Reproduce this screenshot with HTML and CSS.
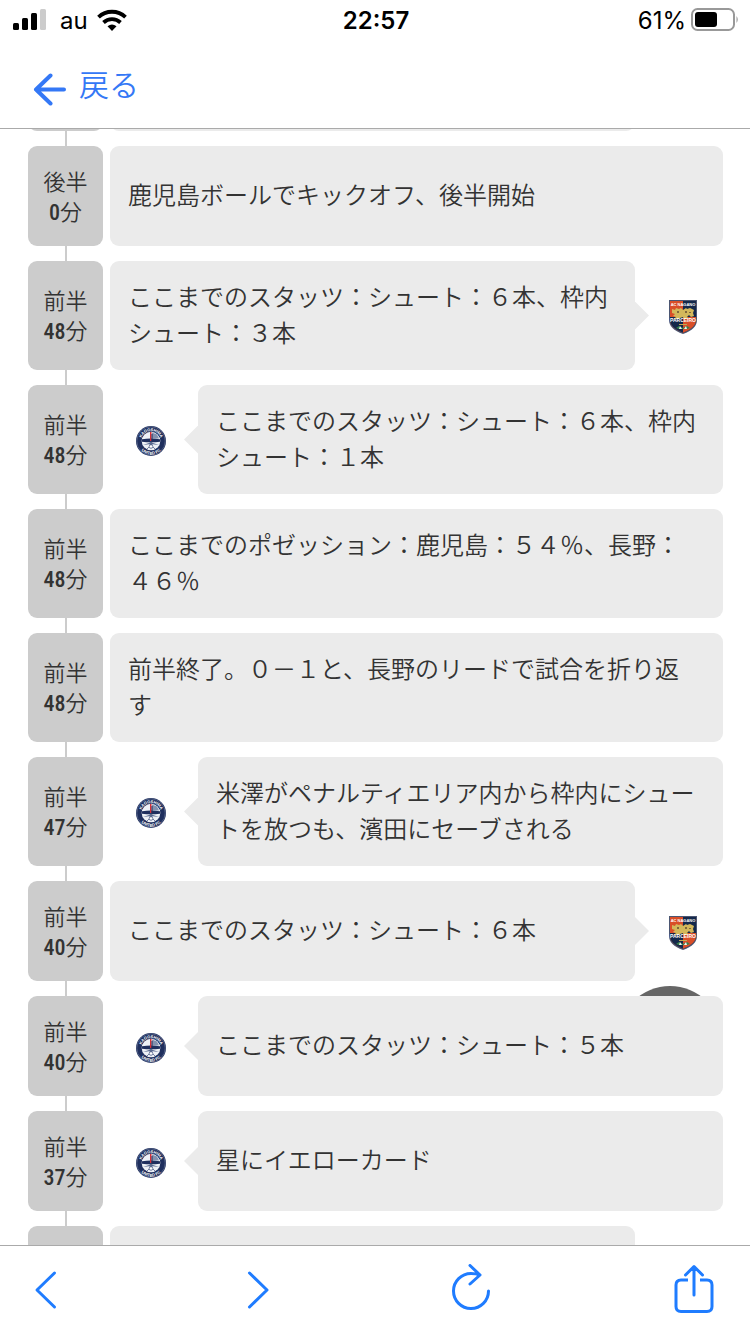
FILE: index.html
```html
<!DOCTYPE html>
<html lang="ja">
<head>
<meta charset="utf-8">
<meta name="viewport" content="width=device-width, initial-scale=1">
<title>テキスト速報</title>
<link rel="stylesheet" href="styles.css">
</head>
<body>
<div class="app">
  <div class="status">
    <div class="status__left">
      <svg width="33" height="22" viewBox="0 0 33 22" aria-hidden="true">
        <rect x="0" y="14" width="6" height="7" rx="1.500"/>
        <rect x="9" y="9" width="6" height="12" rx="1.500"/>
        <rect x="18" y="4" width="6" height="17" rx="1.500"/>
        <rect x="27" y="0" width="6" height="21" rx="1.500" fill="#ccc"/>
      </svg>
      <span class="status__carrier">au</span>
      <svg width="30" height="22" viewBox="0 0 30 22" aria-hidden="true">
        <g fill="none" stroke="#000" stroke-width="3.800">
          <path d="M1.500 8.200a19.500 19.500 0 0 1 27 0"/>
          <path d="M6.500 13.500a12.500 12.500 0 0 1 17 0"/>
        </g>
        <path d="M10.500 17.200q4.500-3.600 9 0L15 22z"/>
      </svg>
    </div>
    <time class="status__clock">22:57</time>
    <div class="status__right">
      <span>61%</span>
      <svg width="48" height="24" viewBox="0 0 48 24" aria-hidden="true">
        <rect x="1" y="1" width="42" height="21" rx="5.500" fill="none" stroke="#999" stroke-width="2"/>
        <rect x="4" y="4" width="22" height="15" rx="3"/>
        <path d="M45.500 8q2.500 3.500 0 7z" fill="#999"/>
      </svg>
    </div>
  </div>

  <header class="header">
    <button class="back" type="button">
      <svg class="back__arrow" width="33" height="33" viewBox="0 0 33 33" aria-hidden="true">
        <path d="M17.500 2.500L3 16.500l14.500 14M3 16.500h28" fill="none" stroke="currentColor" stroke-width="4" stroke-linecap="round" stroke-linejoin="round"/>
      </svg>
      <span>戻る</span>
    </button>
  </header>

  <main class="feed">
    <button class="to-top" type="button" aria-label="トップへ"></button>
    <ol class="timeline">
      <li class="entry entry--previous entry--away">
        <div class="entry__time"></div>
        <div class="entry__body"></div>
      </li>
      <li class="entry">
        <div class="entry__time">後半<br><b>0</b>分</div>
        <p class="entry__body">鹿児島ボールでキックオフ、後半開始</p>
      </li>
      <li class="entry entry--double entry--away">
        <div class="entry__time">前半<br><b>48</b>分</div>
        <p class="entry__body">ここまでのスタッツ：シュート：６本、枠内シュート：３本</p>
        <div class="entry__team">
          <svg width="28" height="34" viewBox="0 0 28 34" role="img" aria-label="長野">
            <g id="nagano">
              <path d="M0 0h28v20q0 9-14 14Q0 29 0 20z" fill="#4b5672"/>
              <path d="M1 1h13v31.800Q1 28 1 20z" fill="#d94e28"/>
              <path d="M14 1h13v19q0 8-13 12.800z" fill="#14284b"/>
              <path d="M1 17h13v15.800Q1 28 1 20z" fill="#14284b"/>
              <path d="M14 17h13v3q0 8-13 12.800z" fill="#d94e28"/>
              <path d="M3 9l3 1 1-2 3 1 2-1 2 2 3-2 1 1 3-1 4 2-1 3 1 3-3 1-2-2-2 2 2 2h-5l-1-2-3 1-2 1H5l2-2-3-1 2-2-3-1z" fill="#d3b85b"/>
              <path d="M8 11h2v2H8zM16 11h2v2h-2zM20 12h2v1h-2z" fill="#80683b"/>
              <path d="M10 24h8v1h-8z" fill="#c1a850"/>
              <path d="M7 28l3-2 4 2 4-2 3 2-3 1H10z" fill="#38814c"/>
              <path d="M11 26l2 3h-3zM17 26l1 3h-3z" fill="#f3f5ef"/>
              <text class="crest-text" x="14" y="6">AC NAGANO</text>
              <text class="crest-text crest-text--large" x="14" y="22">PARCEIRO</text>
            </g>
          </svg>
        </div>
      </li>
      <li class="entry entry--double entry--home">
        <div class="entry__time">前半<br><b>48</b>分</div>
        <div class="entry__team">
          <svg width="30" height="30" viewBox="0 0 30 30" role="img" aria-label="鹿児島">
            <g id="kagoshima">
              <circle cx="15" cy="15" r="15" fill="#1f2f5e"/>
              <circle cx="15" cy="15" r="14.2" fill="none" stroke="#7d88a5" stroke-width="0.5"/>
              <circle cx="15" cy="15" r="9.300" fill="#eef1f6"/>
              <path d="M16 6.500l5 2 2 4h-7z" fill="#8291ae"/>
              <path d="M6 13.200q9-1.600 18 0v2.500q-9 1-18 0z" fill="#1f2f5e"/>
              <path d="M14 6h1.500v9H14z" fill="#d22f37"/>
              <path d="M15.500 8h1v8h-1z" fill="#1f2f5e"/>
              <path d="M7 19l6-2 2-1.500 2 1.500 6 2-6-.7-2 1-2-1z" fill="#596a90"/>
              <circle cx="15" cy="20.500" r="1.800" fill="#fff" stroke="#394b78" stroke-width="0.700"/>
              <path d="M11 23l2-2M19 23l-2-2" stroke="#6f7d9d" stroke-width="1"/>
              <path id="arc-top" d="M5 15a10 10 0 0 1 20 0" fill="none"/>
              <path id="arc-bottom" d="M1.500 15a13.500 13.500 0 0 0 27 0" fill="none"/>
              <text class="crest-text"><textPath href="#arc-top" startOffset="50%">KAGOSHIMA</textPath></text>
              <text class="crest-text"><textPath href="#arc-bottom" startOffset="50%">UNITED FC</textPath></text>
            </g>
          </svg>
        </div>
        <p class="entry__body">ここまでのスタッツ：シュート：６本、枠内シュート：１本</p>
      </li>
      <li class="entry entry--double">
        <div class="entry__time">前半<br><b>48</b>分</div>
        <p class="entry__body">ここまでのポゼッション：鹿児島：５４％、長野：４６％</p>
      </li>
      <li class="entry entry--double">
        <div class="entry__time">前半<br><b>48</b>分</div>
        <p class="entry__body">前半終了。０－１と、長野のリードで試合を折り返す</p>
      </li>
      <li class="entry entry--double entry--home">
        <div class="entry__time">前半<br><b>47</b>分</div>
        <div class="entry__team"><svg width="30" height="30" viewBox="0 0 30 30" role="img" aria-label="鹿児島"><use href="#kagoshima"/></svg></div>
        <p class="entry__body">米澤がペナルティエリア内から枠内にシュートを放つも、濱田にセーブされる</p>
      </li>
      <li class="entry entry--away">
        <div class="entry__time">前半<br><b>40</b>分</div>
        <p class="entry__body">ここまでのスタッツ：シュート：６本</p>
        <div class="entry__team"><svg width="28" height="34" viewBox="0 0 28 34" role="img" aria-label="長野"><use href="#nagano"/></svg></div>
      </li>
      <li class="entry entry--home">
        <div class="entry__time">前半<br><b>40</b>分</div>
        <div class="entry__team"><svg width="30" height="30" viewBox="0 0 30 30" role="img" aria-label="鹿児島"><use href="#kagoshima"/></svg></div>
        <p class="entry__body">ここまでのスタッツ：シュート：５本</p>
      </li>
      <li class="entry entry--home">
        <div class="entry__time">前半<br><b>37</b>分</div>
        <div class="entry__team"><svg width="30" height="30" viewBox="0 0 30 30" role="img" aria-label="鹿児島"><use href="#kagoshima"/></svg></div>
        <p class="entry__body">星にイエローカード</p>
      </li>
      <li class="entry entry--away">
        <div class="entry__time"></div>
        <div class="entry__body"></div>
      </li>
    </ol>
  </main>

  <nav class="toolbar" aria-label="ブラウザ">
    <button class="tool" type="button" aria-label="戻る">
      <svg viewBox="0 0 40 50"><path d="M29.500 9L12 26l17.500 17"/></svg>
    </button>
    <button class="tool" type="button" aria-label="進む">
      <svg viewBox="0 0 40 50"><path d="M11.500 9L29 26 11.500 43"/></svg>
    </button>
    <button class="tool" type="button" aria-label="再読み込み">
      <svg viewBox="0 0 40 50"><path d="M37.500 27A17.500 17.500 0 1 1 20 9.500q5 0 9 1.500M19 1.500l10 9.500-10 9"/></svg>
    </button>
    <button class="tool" type="button" aria-label="共有">
      <svg viewBox="0 0 40 50"><path stroke-linecap="butt" d="M14 16H7q-5 0-5 5v21.500q0 5 5 5h26q5 0 5-5V21q0-5-5-5h-7"/><path d="M20 31V3M11.500 11L20 2.500l8.500 8.500"/></svg>
    </button>
  </nav>
</div>
</body>
</html>
```
FILE: styles.css
```css
* {
  box-sizing: border-box;
}

body {
  margin: 0;
  background: #fff;
  color: #333;
  font-family: "Noto Sans CJK JP", sans-serif;
  font-weight: 350;
  text-spacing-trim: space-all;
}

button {
  padding: 0;
  border: 0;
  background: none;
  font: inherit;
}

svg {
  display: block;
}

.crest-text {
  fill: #fff;
  font-family: "Liberation Sans", sans-serif;
  font-size: 4px;
  font-weight: 700;
  text-anchor: middle;
}

.crest-text--large {
  font-size: 5px;
}

.app {
  display: flex;
  flex-direction: column;
  height: 100vh;
}

/* Status bar */

.status {
  display: grid;
  grid-template-columns: 1fr auto 1fr;
  align-items: center;
  height: 40px;
  padding: 0 11px 0 13px;
  color: #000;
  font-family: Inter, sans-serif;
  font-size: 24px;
  font-weight: 400;
}

.status__left,
.status__right {
  display: flex;
  align-items: center;
}

.status__carrier {
  margin: 0 9px 0 14px;
}

.status__clock {
  font-weight: 600;
}

.status__right {
  justify-content: flex-end;
  gap: 5px;
}

/* Header */

.header {
  display: flex;
  height: 89px;
  padding-left: 33px;
  border-bottom: 1px solid #aaa;
}

.back {
  display: flex;
  align-items: center;
  gap: 13px;
  padding-bottom: 3px;
  color: #3478f6;
  font-size: 30px;
}

.back__arrow {
  margin-top: 13px;
}

/* Timeline */

.feed {
  position: relative;
  flex: 1;
  min-height: 0;
  overflow: hidden;
}

.to-top {
  position: absolute;
  right: 28px;
  bottom: 155px;
  width: 104px;
  height: 104px;
  border-radius: 50%;
  background: #666;
}

.timeline {
  position: relative;
  display: flex;
  flex-direction: column;
  gap: 15px;
  margin: 0;
  padding: 0 27px 0 28px;
  list-style: none;
}

.timeline::before {
  content: "";
  position: absolute;
  top: 0;
  bottom: 0;
  left: 65px;
  width: 2px;
  background: #ccc;
}

.entry {
  position: relative;
  display: grid;
  grid-template-columns: 75px 1fr;
  column-gap: 7px;
  min-height: 100px;
}

.entry--previous {
  margin-top: -98px;
}

.entry--double {
  min-height: 109px;
}

.entry--away {
  grid-template-columns: 75px 1fr 81px;
}

.entry--home {
  grid-template-columns: 75px 81px 1fr;
}

.entry__time {
  align-content: center;
  border-radius: 9px;
  background: #ccc;
  font-size: 22px;
  line-height: 30px;
  text-align: center;
}

.entry__time b {
  font-family: "Roboto Condensed", Roboto, sans-serif;
  font-weight: 500;
}

.entry__body {
  position: relative;
  align-content: center;
  margin: 0;
  padding: 0 20px 4px 18px;
  border-radius: 9px;
  background: #ebebeb;
  font-size: 24px;
  line-height: 36px;
}

.entry--away .entry__body::after,
.entry--home .entry__body::before {
  content: "";
  position: absolute;
  top: calc(50% - 14px);
  width: 14px;
  height: 28px;
  background: #ebebeb;
}

.entry--away .entry__body::after {
  left: 100%;
  clip-path: polygon(0 0, 100% 50%, 0 100%);
}

.entry--home .entry__body::before {
  right: 100%;
  clip-path: polygon(100% 0, 0 50%, 100% 100%);
}

.entry__team {
  display: flex;
  align-items: center;
  justify-content: center;
  padding-top: 3px;
}

/* Browser toolbar */

.toolbar {
  display: grid;
  grid-template-columns: 213fr 213fr 223fr 40px;
  padding: 18px 36px 20px 25px;
  border-top: 1px solid #aaa;
}

.tool {
  width: 40px;
  height: 50px;
  color: #1f7cff;
}

.tool svg {
  width: 100%;
  height: 100%;
  fill: none;
  stroke: currentColor;
  stroke-width: 3;
  stroke-linecap: round;
  stroke-linejoin: round;
}
```
